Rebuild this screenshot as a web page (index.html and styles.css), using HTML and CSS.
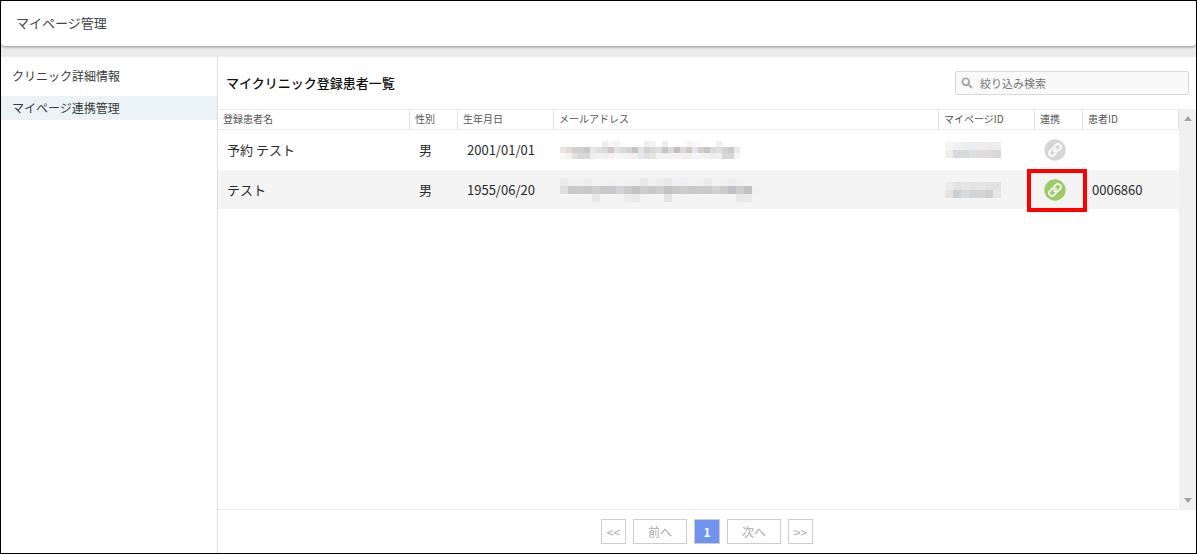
FILE: index.html
```html
<!DOCTYPE html>
<html lang="ja">
<head>
    <meta charset="UTF-8">
    <meta name="viewport" content="width=device-width, initial-scale=1.0">
    <title>マイページ管理</title>
    <link rel="stylesheet" href="styles.css">
</head>
<body>
    <svg class="symbols" aria-hidden="true">
        <symbol id="link" viewBox="0 0 22 22">
            <circle cx="11" cy="11" r="10.7" fill="currentColor"/>
            <g fill="none" stroke="#fff" stroke-width="3" stroke-linecap="round" transform="translate(3.9 3.9) scale(.59)">
                <path d="M10 13a5 5 0 0 0 7.54.54l3-3a5 5 0 0 0-7.07-7.07l-3 3"/>
                <path d="M14 11a5 5 0 0 0-7.54-.54l-3 3a5 5 0 0 0 7.07 7.07l3-3"/>
            </g>
        </symbol>
    </svg>

    <header class="header">
        <h1>マイページ管理</h1>
    </header>

    <div class="content">
        <nav class="menu">
            <a href="#clinic">クリニック詳細情報</a>
            <a href="#mypage" class="active">マイページ連携管理</a>
        </nav>

        <main class="main">
            <div class="main_header">
                <h2>マイクリニック登録患者一覧</h2>
                <label class="search">
                    <svg width="12" height="12" viewBox="0 0 12 12" aria-hidden="true">
                        <circle cx="4.8" cy="4.8" r="3.4" fill="none" stroke="#aaa" stroke-width="1.9"/>
                        <path d="M7.4 7.4l2.9 2.9" stroke="#aaa" stroke-width="2.1" stroke-linecap="round"/>
                    </svg>
                    <input type="search" placeholder="絞り込み検索" aria-label="絞り込み検索">
                </label>
            </div>

            <div class="list">
                <div class="list_body">
                    <table>
                        <colgroup>
                            <col class="col_name">
                            <col class="col_small">
                            <col class="col_mid">
                            <col>
                            <col class="col_mid">
                            <col class="col_small">
                            <col class="col_mid">
                        </colgroup>
                        <thead>
                            <tr>
                                <th>登録患者名</th>
                                <th>性別</th>
                                <th>生年月日</th>
                                <th>メールアドレス</th>
                                <th>マイページID</th>
                                <th>連携</th>
                                <th>患者ID</th>
                            </tr>
                        </thead>
                        <tbody>
                            <tr>
                                <td>予約 テスト</td>
                                <td>男</td>
                                <td>2001/01/01</td>
                                <td class="masked"><svg data-mask="mail1"></svg></td>
                                <td class="masked"><svg data-mask="id1"></svg></td>
                                <td class="link_cell">
                                    <button class="link_button" aria-label="連携"><svg width="22" height="22"><use href="#link"/></svg></button>
                                </td>
                                <td></td>
                            </tr>
                            <tr>
                                <td>テスト</td>
                                <td>男</td>
                                <td>1955/06/20</td>
                                <td class="masked"><svg data-mask="mail2"></svg></td>
                                <td class="masked"><svg data-mask="id2"></svg></td>
                                <td class="link_cell">
                                    <button class="link_button linked" aria-label="連携済み"><svg width="22" height="22"><use href="#link"/></svg></button>
                                    <span class="frame"></span>
                                </td>
                                <td>0006860</td>
                            </tr>
                        </tbody>
                    </table>
                </div>
                <div class="scrollbar">
                    <svg width="8" height="5" viewBox="0 0 8 5"><path d="M4 0l4 5H0z" fill="#a3a3a3"/></svg>
                    <svg width="8" height="5" viewBox="0 0 8 5"><path d="M0 0h8L4 5z" fill="#a3a3a3"/></svg>
                </div>
            </div>

            <div class="pager">
                <button>&lt;&lt;</button>
                <button class="wide">前へ</button>
                <button class="current">1</button>
                <button class="wide">次へ</button>
                <button>&gt;&gt;</button>
            </div>
        </main>
    </div>
    <script src="script.js"></script>
</body>
</html>
```
FILE: styles.css
```css
* {
    box-sizing: border-box;
}

body {
    display: flex;
    flex-direction: column;
    min-height: 100vh;
    margin: 0;
    border: 1px solid #000;
    background-color: #ececec;
    color: #2a2a2a;
    font-family: "Noto Sans CJK JP", sans-serif;
    font-size: 13px;
}

button,
input {
    font-family: inherit;
}

h1,
h2 {
    margin: 0;
    font-size: 13px;
    font-weight: normal;
}

.symbols {
    display: none;
}

/* header */
.header {
    display: flex;
    align-items: center;
    height: 45px;
    padding: 0 15px 2px;
    border-radius: 4px;
    background-color: #fff;
    box-shadow: 0 1px 3px rgba(0, 0, 0, 0.4);
}

.header h1 {
    color: #444;
}

.content {
    display: flex;
    flex: 1;
    margin-top: 11px;
    background-color: #fff;
}

/* menu */
.menu {
    display: flex;
    flex-direction: column;
    gap: 8px;
    width: 217px;
    padding-top: 7px;
    border-right: 1px solid #ddd;
}

.menu a {
    padding: 0 11px;
    color: #3a3a3a;
    font-size: 12px;
    line-height: 24px;
    text-decoration: none;
}

.menu .active {
    background-color: #eaf4f7;
}

/* main */
.main {
    display: flex;
    flex: 1;
    flex-direction: column;
    min-width: 0;
}

.main_header {
    display: flex;
    align-items: center;
    justify-content: space-between;
    height: 52px;
    padding: 0 7px 0 8px;
}

.main_header h2 {
    padding-bottom: 2px;
    color: #111;
    font-weight: 500;
}

.search {
    display: flex;
    align-items: center;
    gap: 7px;
    width: 234px;
    height: 24px;
    padding: 0 5px;
    border: 1px solid #d9d9d9;
    border-radius: 2px;
    background-color: #f9f9f9;
}

.search input {
    flex: 1;
    min-width: 0;
    padding: 0;
    border: 0;
    outline: 0;
    background: none;
    font-size: 11px;
}

.search input::placeholder {
    color: #777;
}

/* list */
.list {
    display: flex;
    flex: 1;
}

.list_body {
    flex: 1;
    border-top: 1px solid #ebebeb;
    border-bottom: 1px solid #ebebeb;
}

table {
    width: 100%;
    border-spacing: 0;
    table-layout: fixed;
}

.col_name {
    width: 192px;
}

.col_small {
    width: 48px;
}

.col_mid {
    width: 96px;
}

th {
    height: 20px;
    padding: 0 5px 2px;
    border-right: 1px solid #e2e2e2;
    border-bottom: 1px solid #ebebeb;
    color: #555;
    font-size: 10px;
    font-weight: normal;
    line-height: 16px;
    text-align: left;
}

td {
    height: 40px;
    padding: 0 9px;
    line-height: 20px;
}

tbody tr:nth-child(even) {
    background-color: #f4f4f4;
}

tbody tr:nth-child(even) td {
    height: 39px;
}

.masked {
    padding: 0 6px;
}

.masked svg {
    display: block;
}

.link_cell {
    position: relative;
    padding: 0 9px;
}

.link_button {
    display: block;
    padding: 0;
    border: 0;
    background: none;
    color: #d6d6d6;
    cursor: pointer;
}

.link_button svg {
    display: block;
}

.linked {
    color: #9ccc65;
}

.frame {
    position: absolute;
    inset: -1px -4px -3px -8px;
    border: 4px solid #f00;
    pointer-events: none;
}

.scrollbar {
    display: flex;
    flex-direction: column;
    align-items: center;
    justify-content: space-between;
    width: 17px;
    padding: 7px 0;
    background-color: #f0f0f0;
}

/* pager */
.pager {
    display: flex;
    align-items: center;
    justify-content: center;
    gap: 7px;
    height: 43px;
}

.pager button {
    width: 25px;
    height: 25px;
    padding: 0;
    border: 1px solid #ccc;
    background-color: #fff;
    color: #aaa;
    font-size: 12px;
    line-height: 20px;
}

.pager .wide {
    width: 54px;
}

.pager .current {
    width: 26px;
    background-color: #7094ee;
    color: #fff;
    font-weight: bold;
}
```
FILE: script.js
```js
// size = cell size, rows = one colour per cell, "-" stays empty
const masks = {
  mail1: {
    size: 6,
    rows: [
      "- - - - - - - eee f8f6f6 f4f4f4 - - - - efeded f2f2f2 - eee - - - faf5f3 f8f8f8 - - - f0f0f0 - -",
      "eee3e1 dcdcdc d6cfce d0d0d2 c8c8cc e4e7ea dedede dadada d0c8c6 e6dfdd d3dcdf dbd0cc c4c2ca dfe2e6 d2d2d4 dadada dedede c6c6c6 d8d8dc c4bec0 dadada d0c9c0 e2e4e7 d5cdca c5c4c8 dadada e0dfe0 d3d3d3 cacaca e8e8ec",
      "f9f7f7 f1f1f1 e0e0e0 d8d8d8 d8d8d8 eee f1f1f1 f0f0f0 f3f1f1 f6f6f6 f4f4f4 f1f1f1 f0f0f0 e6e9ec dfdfdf e4e4e4 f1f1f1 f1f1f1 f2f2f2 f4f4f4 f1f1f1 f1f1f1 f5f5f5 f4f4f4 f1f1f1 eee f1f1f1 d8d8d8 d6d6d6 f6f6f6"
    ]
  },
  mail2: {
    size: 8,
    rows: [
      "ebebeb f1f1f1 f1f1f1 ececec f2f2f2 f2f2f2 f1f1f1 f0f2f3 f1f1f1 f1f1f1 e8e8e8 f1f1f1 ededed e6e9e8 f1f1f1 eef0f2 f2f2f2 f1f1f1 ebebeb f2f2f2 f1f1f1 ededed f1f1f1 f3f3f3 -",
      "dededf c9c9c9 cbcbcb c7c7c7 d0cfce c6c8ca c8c8ce d1d4d7 cacaca c3c3c3 cdcdcd c8c8c8 cecece c2c4c4 c8c8cf cdcdcd c8c8c8 c9cbc9 c9c9c9 d2d2d2 cccccc bfc0ca cdcdcd c3c2c2 eff1f3",
      "- - - - e8e8e8 - - - ededed e9e9e9 - - - e4e4e4 - - - - - - - - e8e8e8 e9e9e9 -"
    ]
  },
  id1: {
    size: 8,
    rows: [
      "f7f5f3 f0f1f4 eeeeee ececec ededed ebebeb ededed",
      "f2ede8 d4d8df dadada dce1e8 e0dddc dddbdb d8d8d8"
    ]
  },
  id2: {
    size: 8,
    rows: [
      "ebebeb e3e3e3 e7e5e5 e4e4e4 e5e5e5 e2e2e2 e2e2e2",
      "e8e3de cdcfd6 dadada cfd3da d5d5d5 d1d0d0 e6e6e6"
    ]
  }
};

document.querySelectorAll("[data-mask]").forEach(function (svg) {
  const mask = masks[svg.dataset.mask];
  const size = mask.size;
  let width = 0;

  mask.rows.forEach(function (row, y) {
    const cells = row.split(" ");
    width = Math.max(width, cells.length * size);
    cells.forEach(function (color, x) {
      if (color === "-") return;
      const rect = document.createElementNS("http://www.w3.org/2000/svg", "rect");
      rect.setAttribute("x", x * size);
      rect.setAttribute("y", y * size);
      rect.setAttribute("width", size);
      rect.setAttribute("height", size);
      rect.setAttribute("fill", "#" + color);
      svg.appendChild(rect);
    });
  });

  svg.setAttribute("width", width);
  svg.setAttribute("height", mask.rows.length * size);
});
```
